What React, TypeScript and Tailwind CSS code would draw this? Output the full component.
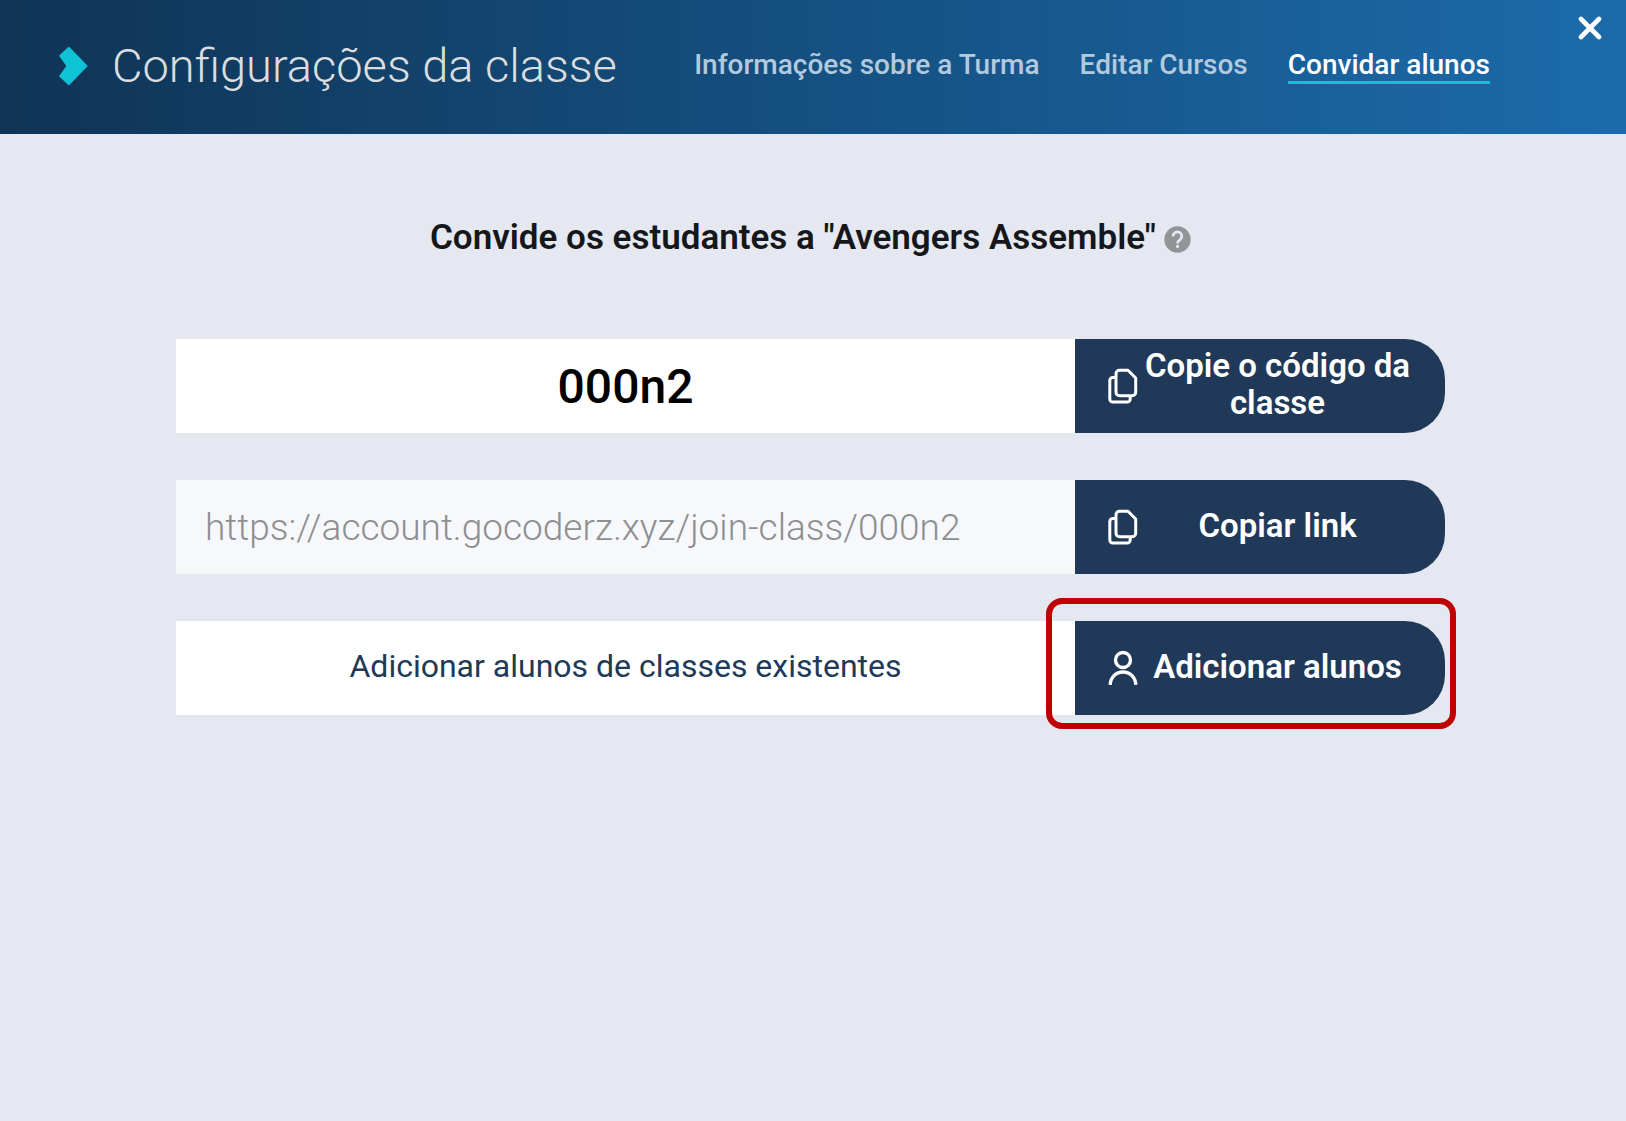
import { type ReactNode } from "react";

const tabs = [
  { id: "info", label: "Informações sobre a Turma", active: false },
  { id: "courses", label: "Editar Cursos", active: false },
  { id: "invite", label: "Convidar alunos", active: true },
];

function CopyIcon() {
  return (
    <svg className="w-[30px] h-9 shrink-0" viewBox="0 0 30 36" fill="none" stroke="currentColor" strokeWidth="3" strokeLinejoin="round" aria-hidden="true">
      <path d="M11.5 2.3H20L27.7 10V24.2a3.5 3.5 0 0 1-3.5 3.5H11.5A3.5 3.5 0 0 1 8 24.2V5.8a3.5 3.5 0 0 1 3.5-3.5Z" />
      <path d="M8 9.5H4.8a3 3 0 0 0-3 3V31a3 3 0 0 0 3 3h14.4a3 3 0 0 0 3-3v-3.3" />
    </svg>
  );
}

function PersonIcon() {
  return (
    <svg className="w-[30px] h-9 shrink-0" viewBox="0 0 30 36" fill="none" stroke="currentColor" strokeWidth="3.3" aria-hidden="true">
      <circle cx="15" cy="10" r="7.5" />
      <path d="M2.2 34.8C2.6 27 8 22 15 22s12.4 5 12.8 12.8" />
    </svg>
  );
}

function ActionButton({ icon, children }: { icon: ReactNode; children: ReactNode }) {
  return (
    <button className="w-[370px] shrink-0 flex items-center gap-1 pl-[33px] pr-8 rounded-r-[40px] bg-[#213958] text-white text-[33px] leading-[37px] font-semibold cursor-pointer">
      {icon}
      <span className="flex-1 pb-1 text-center">{children}</span>
    </button>
  );
}

export default function App() {
  return (
    <div className="min-h-screen bg-[#e5e8f1] font-[Roboto,sans-serif]">
      {/* Header */}
      <header className="relative h-[134px] flex items-center pl-[58px] pr-[136px] pb-0.5 bg-linear-to-r from-[#0f3456] via-[#155081] to-[#1b6bab]">
        <svg className="w-[30px] h-10 shrink-0" viewBox="0 0 30 40" fill="#0fc3d6" stroke="#0fc3d6" strokeWidth="1.5" strokeLinejoin="round" aria-hidden="true">
          <path d="M10.8 1.6 28.8 20 10.8 38.4 2 30.2 8.6 21Q9.3 20 8.6 19L2 9.8Z" />
        </svg>
        <h1 className="ml-6 text-[47px] leading-[60px] font-[350] text-[#dcdddf] whitespace-nowrap">Configurações da classe</h1>
        <nav className="ml-auto flex gap-10 text-[28px] leading-[32px] font-medium whitespace-nowrap">
          {tabs.map((t) => (
            <a
              key={t.id}
              href={`#${t.id}`}
              className={t.active ? "border-b-3 border-[#0fc3d6] text-white" : "border-b-3 border-transparent text-[#b3cade]"}
            >
              {t.label}
            </a>
          ))}
        </nav>
        <button aria-label="Fechar" className="absolute top-4 right-6 text-white cursor-pointer">
          <svg className="size-6" viewBox="0 0 24 24" fill="none" stroke="currentColor" strokeWidth="4.6" strokeLinecap="round" aria-hidden="true">
            <path d="M3 3 21 21M21 3 3 21" />
          </svg>
        </button>
      </header>

      <main className="pl-44 pr-[181px] pt-[82px]">
        <div className="flex items-center justify-center gap-2">
          <h2 className="text-[35px] leading-[44px] font-semibold text-[#15171a]">Convide os estudantes a "Avengers Assemble"</h2>
          <button aria-label="Ajuda" className="mt-0.5 text-[#939497] cursor-pointer">
            <svg className="size-[27px]" viewBox="0 0 27 27" aria-hidden="true">
              <circle cx="13.5" cy="13.5" r="13.2" fill="currentColor" />
              <path d="M9.2 10.4a4.3 4.3 0 1 1 7.1 3c-1.6 1.3-2.8 2-2.8 4" fill="none" stroke="#e5e8f1" strokeWidth="2.8" />
              <rect x="12.1" y="19" width="2.8" height="2.8" fill="#e5e8f1" />
            </svg>
          </button>
        </div>

        <div className="mt-[79px] flex flex-col gap-[47px]">
          {/* Class code */}
          <div className="flex h-[94px]">
            <div className="flex-1 flex items-center justify-center pt-0.5 bg-white text-black text-[48px] font-medium">000n2</div>
            <ActionButton icon={<CopyIcon />}>Copie o código da classe</ActionButton>
          </div>

          {/* Join link */}
          <div className="flex h-[94px]">
            <input
              aria-label="Link da classe"
              readOnly
              value="https://account.gocoderz.xyz/join-class/000n2"
              className="flex-1 min-w-0 px-[29px] pt-0.5 bg-[#f7f8fb] text-[#8e8f91] text-[37px] font-light outline-none"
            />
            <ActionButton icon={<CopyIcon />}>Copiar link</ActionButton>
          </div>

          {/* Existing students */}
          <div className="relative flex h-[94px]">
            <div className="flex-1 flex items-center justify-center pb-1 bg-white text-[#213958] text-[32px]">
              Adicionar alunos de classes existentes
            </div>
            <ActionButton icon={<PersonIcon />}>Adicionar alunos</ActionButton>
            <div className="absolute -top-[23px] -right-[11px] w-[410px] h-[131px] border-6 border-[#c00000] rounded-2xl pointer-events-none" />
          </div>
        </div>
      </main>
    </div>
  );
}
